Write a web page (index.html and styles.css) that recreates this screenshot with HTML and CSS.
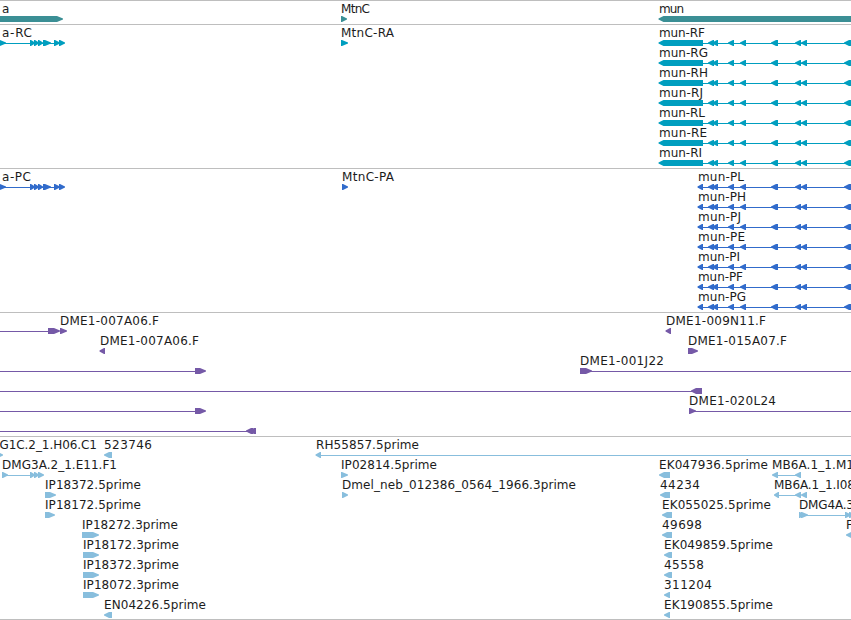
FILE: index.html
```
<!DOCTYPE html>
<html lang="en">
<head>
<meta charset="utf-8">
<title>Genome tracks</title>
<link rel="stylesheet" href="styles.css">
</head>
<body>
<main class="browser" id="browser"></main>
<script src="tracks.js"></script>
</body>
</html>
```
FILE: styles.css
```
body {
  margin: 0;
  background: #fff;
  overflow: hidden;
}
.browser {
  display: flex;
  flex-direction: column;
  width: 851px;
  height: 620px;
  box-sizing: border-box;
  border-bottom: 1px solid #bebebe;
  overflow: hidden;
}
.track {
  flex: none;
  border-top: 1px solid #bebebe;
  padding-bottom: 3px;
}
.track:last-child { margin-bottom: -1px; padding-bottom: 2px; }
.row {
  display: block;
  width: 851px;
  height: 20px;
  fill: currentColor;
}
.label {
  font: 12px "DejaVu Sans", sans-serif;
  fill: #1c1c1c;
}
.gene { color: #3b8f95; }
.transcript { color: #009ebf; }
.protein { color: #316bcb; }
.bac { color: #7559a7; }
.est { color: #88bedd; }
```
FILE: tracks.js
```
// Row items: t = label [x, width, text], l = intron line [x1, x2],
// r / f = right- or left-pointing feature [x1, x2].
const t = (x, w, s) => ({ k: "t", x, w, s });
const l = (a, b) => ({ k: "l", a, b });
const r = (a, b) => ({ k: "r", a, b });
const f = (a, b) => ({ k: "f", a, b });

const exonsA = [l(0, 62), r(-2, 6), r(30, 35), r(34, 39), r(38, 43), r(43, 51), r(54, 60), r(59, 65)];
const exonsMun = [f(708, 714), f(712, 718), f(728, 734), f(740, 746), f(771, 778), f(795, 801), f(801, 807), f(844, 852)];
const rna = (s, w) => [t(659, w, "mun-" + s), l(703, 851), f(658.5, 703), ...exonsMun];
const pep = (s, w) => [t(698, w, "mun-" + s), l(698, 851), f(697.5, 703), ...exonsMun];

const tracks = [
  ["gene", [
    [t(2, 7, "a"), r(-9, 63), t(341, 29, "MtnC"), r(341, 347), t(659, 25, "mun"), f(658.5, 860)]
  ]],
  ["transcript", [
    [t(2, 30, "a-RC"), ...exonsA, t(341, 53, "MtnC-RA"), r(341, 348), ...rna("RF", 46)],
    rna("RG", 49), rna("RH", 49), rna("RJ", 44), rna("RL", 46), rna("RE", 48), rna("RI", 43)
  ]],
  ["protein", [
    [t(2, 29, "a-PC"), ...exonsA, t(342, 52, "MtnC-PA"), r(342, 348), ...pep("PL", 46)],
    pep("PH", 48), pep("PJ", 43), pep("PE", 47), pep("PI", 42), pep("PF", 45), pep("PG", 48)
  ]],
  ["bac", [
    [l(0, 48), r(48, 60), t(60, 99, "DME1-007A06.F"), r(60, 67), t(666, 100, "DME1-009N11.F"), f(665.5, 671)],
    [t(100, 99, "DME1-007A06.F"), f(99.5, 105), t(688, 99, "DME1-015A07.F"), r(688, 698)],
    [l(0, 195), r(195, 206), t(580, 84, "DME1-001J22"), r(580, 592), l(590, 851)],
    [l(0, 695), f(691, 702)],
    [l(0, 195), r(195, 206), t(689, 87, "DME1-020L24"), r(689, 696), l(694, 851)],
    [l(0, 249), f(246, 253), f(249, 256)]
  ]],
  ["est", [
    [t(-20, 117, "DMG1C.2_1.H06.C1"), r(-3, 3), t(104, 48, "523746"), f(104, 112), t(316, 103, "RH55857.5prime"), l(318, 851), f(315.5, 321)],
    [t(2, 115, "DMG3A.2_1.E11.F1"), r(2, 8), l(5, 31), r(30, 35), r(34, 39), r(38, 44), t(341, 96, "IP02814.5prime"), r(341, 348), t(659, 109, "EK047936.5prime"), f(659, 670), t(772, 82, "MB6A.1_1.M1"), l(774, 800), f(772, 778), f(795, 801)],
    [t(45, 96, "IP18372.5prime"), r(45, 56), t(342, 234, "Dmel_neb_012386_0564_1966.3prime"), r(342, 348), t(660, 40, "44234"), f(660, 670), t(774, 81, "MB6A.1_1.I08"), l(776, 800), f(774, 779), f(795, 801), f(801, 807)],
    [t(45, 96, "IP18172.5prime"), r(45, 55), t(662, 109, "EK055025.5prime"), f(662, 672), t(799, 55, "DMG4A.3"), r(799, 804), r(801, 808), l(805, 848), r(845, 851), r(849, 855)],
    [t(82, 96, "IP18272.3prime"), r(82, 99), t(662, 40, "49698"), f(662, 672), t(846, 7, "F"), f(846, 854)],
    [t(83, 96, "IP18172.3prime"), r(83, 99), t(664, 109, "EK049859.5prime"), f(664, 672)],
    [t(83, 96, "IP18372.3prime"), r(83, 99), t(664, 40, "45558"), f(664, 672)],
    [t(83, 96, "IP18072.3prime"), r(83, 99), t(664, 48, "311204"), f(664, 670)],
    [t(104, 102, "EN04226.5prime"), f(104, 112), t(664, 109, "EK190855.5prime"), f(664, 670)]
  ]]
];

// Heads keep a one-pixel blunt tip so that short exons stay visible.
const draw = {
  t: o => `<text class="label" x="${o.x}" y="12" textLength="${o.w}">${o.s}</text>`,
  l: o => `<rect x="${o.a}" y="18" width="${o.b - o.a}" height="1"/>`,
  r: o => {
    const h = Math.max(o.a + 1, o.b - 6);
    return `<path d="M${o.a} 15H${h}L${o.b} 17.6V18.6L${h} 21H${o.a}Z"/>`;
  },
  f: o => {
    const h = Math.min(o.b - 1, o.a + 5);
    return `<path d="M${o.b} 15H${h}L${o.a} 17.6V18.6L${h} 21H${o.b}Z"/>`;
  }
};

document.getElementById("browser").innerHTML = tracks.map(([name, rows]) =>
  `<section class="track ${name}">${rows.map(items =>
    `<svg class="row" viewBox="0 0 851 20" overflow="visible">${items.map(o => draw[o.k](o)).join("")}</svg>`
  ).join("")}</section>`
).join("");
```
